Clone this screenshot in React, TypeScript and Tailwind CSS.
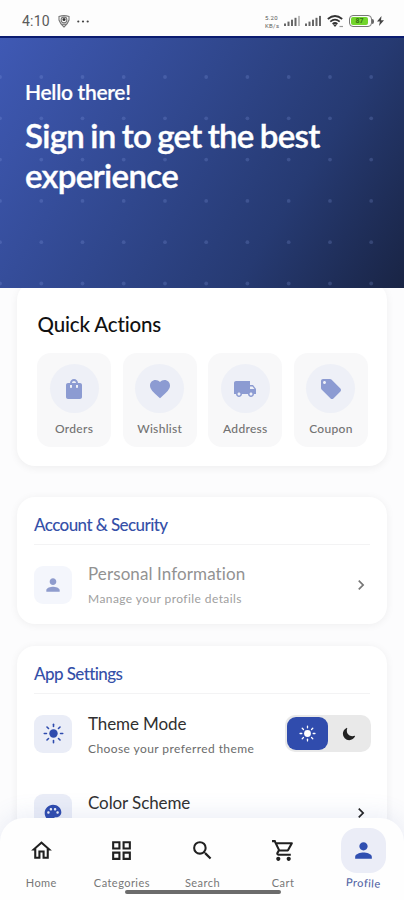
import type { ReactNode } from "react";
import type { IconType } from "react-icons";
import {
  MdFavorite,
  MdLocalOffer,
  MdLocalShipping,
  MdOutlineGridView,
  MdOutlineHome,
  MdOutlineShoppingCart,
  MdPalette,
  MdPerson,
  MdSearch,
  MdShoppingBag,
  MdChevronRight,
} from "react-icons/md";
import { IoMoon } from "react-icons/io5";

type IconProps = { size?: number | string; color?: string };

function Sun({ size = 20, color = "#000" }: IconProps) {
  return (
    <svg width={size} height={size} viewBox="0 0 20 20" fill="none" stroke={color} strokeWidth="1.500" strokeLinecap="round">
      <circle cx="10" cy="10" r="4" fill={color} stroke="none" />
      {[0, 45, 90, 135, 180, 225, 270, 315].map((a) => (
        <path key={a} d="M10 3.300V1.200" transform={`rotate(${a} 10 10)`} />
      ))}
    </svg>
  );
}

function Signal({ bars }: { bars: number }) {
  return (
    <svg width="17" height="12" viewBox="0 0 17 12" className="shrink-0">
      {[0, 1, 2, 3, 4].map((i) => (
        <rect
          key={i}
          x={i * 3.5}
          y={8.5 - i * 1.9}
          width="2"
          height={2.5 + i * 1.9}
          fill={i < bars ? "#666" : "#bdbdbd"}
        />
      ))}
    </svg>
  );
}

function StatusBar() {
  return (
    <div className="flex h-9 shrink-0 items-center bg-[#fdfdfd] pl-[22px] pr-[20px] pt-[6px] text-[#5a5a5a]">
      <span className="w-[29px] font-['Roboto',sans-serif] text-[14px] leading-none tracking-[0.2px]">4:10</span>
      <svg width="12" height="13" viewBox="0 0 12 13" className="ml-[7px]" fill="none" stroke="#777" strokeWidth="1.1">
        <path d="M1 1.5Q6 -.3 11 1.5V5Q10 8.500 6 12Q2 8.500 1 5Z" />
        <circle cx="6" cy="5" r="2.900" />
        <circle cx="6" cy="4.600" r="1.500" fill="#333" stroke="none" />
        <path d="M3.800 9.300H8.200" />
      </svg>
      <svg width="12" height="3" viewBox="0 0 12 3" className="ml-[7px]" fill="#444">
        <circle cx="1.300" cy="1.500" r="1.100" />
        <circle cx="6" cy="1.500" r="1.100" />
        <circle cx="10.700" cy="1.500" r="1.100" />
      </svg>
      <div className="ml-auto flex items-center">
        <div className="flex w-[16px] flex-col gap-px font-['Roboto',sans-serif] text-[6px] leading-[7px] tracking-[0.3px]">
          <div>5.20</div>
          <div>KB/s</div>
        </div>
        <div className="ml-[3px] flex gap-[4px]">
          <Signal bars={4} />
          <Signal bars={5} />
        </div>
        <svg width="17" height="13" viewBox="0 0 17 13" className="ml-[5px]" fill="none" stroke="#333" strokeWidth="1.700">
          <path d="M.8 4Q8 -2 15.200 4" />
          <path d="M3.300 6.600Q8 2.700 12.700 6.600" />
          <path d="M5.600 9Q8 7 10.400 9" />
          <path d="M6 9.500L8 12L10 9.500Z" fill="#333" stroke="none" />
          <path d="M12.500 11.500H16" strokeWidth="1.200" stroke="#999" />
        </svg>
        <div className="ml-[5px] flex h-[12px] w-[23px] items-center rounded-[4px] border border-[#777] p-[1px]">
          <div className="flex h-full w-[17px] items-center justify-center rounded-[2px] bg-[#72d52c] font-['Roboto',sans-serif] text-[7px] font-bold leading-none text-[#347314]">
            87
          </div>
        </div>
        <div className="h-[5px] w-[2px] rounded-r bg-[#666]" />
        <svg width="7" height="10" viewBox="0 0 7 10" className="ml-[3px]" fill="#444">
          <path d="M4.500 0L0 5.600H2.900L2 10L7 4.200H4Z" />
        </svg>
      </div>
    </div>
  );
}

function Hero() {
  return (
    <header className="relative z-10 h-[252px] shrink-0 overflow-hidden border-t-2 border-[#0b1c70] bg-[linear-gradient(122deg,#3f59b4_0%,#30478d_42%,#263a72_70%,#192444_100%)] pl-[25px] pt-[41px] text-white">
      <svg className="absolute inset-x-0 -top-px" width="404" height="252" fill="#8fa3ea" fillOpacity="0.22">
        {[40, 81.300, 122.600, 163.900, 205.200, 246.500].map((y) =>
          [0, 41.300, 82.500, 123.700, 165, 206.200, 247.400, 288.700, 330, 371.200].map((x) => (
            <circle key={`${x}-${y}`} cx={x} cy={y} r="1.900" />
          )),
        )}
      </svg>
      <p className="relative text-[21px] font-semibold leading-[26px] tracking-[-0.300px] [-webkit-text-stroke:0.2px_white]">
        Hello there!
      </p>
      <h1 className="relative mt-[10px] text-[33px] font-semibold leading-[40px] tracking-[-0.670px] [-webkit-text-stroke:0.4px_white] [word-spacing:-1.500px]">
        Sign in to get the best
        <br />
        experience
      </h1>
    </header>
  );
}

const actions: { label: string; Icon: IconType }[] = [
  { label: "Orders", Icon: MdShoppingBag },
  { label: "Wishlist", Icon: MdFavorite },
  { label: "Address", Icon: MdLocalShipping },
  { label: "Coupon", Icon: MdLocalOffer },
];

function QuickActions() {
  return (
    <section className="-mt-[6px] h-[184px] shrink-0 rounded-[18px] bg-white pl-[20px] pr-[19px] pt-[29px] shadow-[0_2px_9px_rgba(0,0,0,0.06)]">
      <h2 className="pl-[0.500px] text-[20.500px] font-medium leading-[26px] tracking-[-0.150px] text-[#111]">Quick Actions</h2>
      <div className="mt-[16px] grid grid-cols-4 gap-[11.500px]">
        {actions.map(({ label, Icon }) => (
          <div key={label} className="flex h-[94px] flex-col items-center rounded-[14px] bg-[#f8f8f9] pt-[11px]">
            <div className="flex h-[49px] w-[49px] items-center justify-center rounded-full bg-[#eef0f7]">
              <Icon size={24} color="#8c9bd2" />
            </div>
            <span className="mt-[8px] text-[12px] font-medium leading-[16px] tracking-[0.3px] text-[#727272]">{label}</span>
          </div>
        ))}
      </div>
    </section>
  );
}

function Section({ title, className, children }: { title: string; className: string; children: ReactNode }) {
  return (
    <section className={`shrink-0 rounded-[18px] bg-white px-[17px] pt-[16px] shadow-[0_1px_9px_rgba(0,0,0,0.06)] ${className}`}>
      <h2 className="h-[32px] border-b border-[#f3f3f4] text-[17px] font-medium leading-[24px] tracking-[-0.580px] text-[#3550a8]">
        {title}
      </h2>
      {children}
    </section>
  );
}

function Row({
  Icon,
  iconSize = 20,
  title,
  subtitle,
  muted = false,
  trailing,
}: {
  Icon: IconType | typeof Sun;
  iconSize?: number;
  title: string;
  subtitle: string;
  muted?: boolean;
  trailing: ReactNode;
}) {
  return (
    <div className="flex h-[79.500px] items-center">
      <div className={`flex h-[38px] w-[38px] items-center justify-center rounded-[9px] ${muted ? "bg-[#f4f6fc]" : "bg-[#eaedf7]"}`}>
        <Icon size={iconSize} color={muted ? "#8f9ccd" : "#2e4bae"} />
      </div>
      <div className={`ml-[16px] flex-1 ${muted ? "pt-[1.500px]" : "pt-[3px]"}`}>
        <div
          className={`text-[17px] leading-[22px] ${muted ? "tracking-[0.1px] text-[#929292]" : "tracking-[-0.1px] text-[#303030]"}`}
        >
          {title}
        </div>
        <div className={`mt-[5px] text-[12px] leading-[18px] tracking-[0.420px] ${muted ? "text-[#a0a0a0]" : "text-[#6b6b6b]"}`}>
          {subtitle}
        </div>
      </div>
      {trailing}
    </div>
  );
}

function ThemeToggle() {
  return (
    <div className="-mr-[1px] flex h-[37px] w-[86px] items-center rounded-[10px] bg-[#e9e9e9] p-[1.500px]">
      <div className="flex h-[33px] w-[41px] items-center justify-center rounded-[9px] bg-[#304cad]">
        <Sun size={17} color="#fff" />
      </div>
      <div className="flex flex-1 items-center justify-center">
        <IoMoon size={14} color="#222" />
      </div>
    </div>
  );
}

const tabs: { label: string; Icon: IconType }[] = [
  { label: "Home", Icon: MdOutlineHome },
  { label: "Categories", Icon: MdOutlineGridView },
  { label: "Search", Icon: MdSearch },
  { label: "Cart", Icon: MdOutlineShoppingCart },
  { label: "Profile", Icon: MdPerson },
];

function TabBar() {
  return (
    <nav className="absolute inset-x-0 bottom-0 z-20 h-[82px] rounded-t-[24px] bg-[#fefefe] shadow-[0_-3px_24px_rgba(80,105,180,0.12)]">
      <div className="grid grid-cols-5 pl-px">
        {tabs.map(({ label, Icon }) => {
          const active = label === "Profile";
          return (
            <div key={label} className="flex flex-col items-center pt-[10px]">
              <div className={`flex h-[45px] w-[45px] items-center justify-center rounded-[16px] ${active ? "bg-[#ebedf7]" : ""}`}>
                <Icon size={25} color={active ? "#304fb1" : "#202020"} />
              </div>
              <span
                className={`mt-[2px] text-[11px] leading-[16px] tracking-[0.45px] ${
                  active ? "rotate-3 font-medium text-[#5667a5]" : "text-[#777]"
                }`}
              >
                {label}
              </span>
            </div>
          );
        })}
      </div>
      <div className="absolute bottom-[6px] left-[125px] h-[4px] w-[156px] rounded-full bg-[#6b6b6b]" />
    </nav>
  );
}

export default function App() {
  return (
    <div className="relative flex h-[900px] w-[404px] flex-col overflow-hidden bg-[#fcfcfd] font-['Lato',sans-serif]">
      <StatusBar />
      <Hero />
      <main className="flex flex-col px-[17px]">
        <QuickActions />
        <Section title="Account & Security" className="mt-[31px] h-[127px]">
          <Row
            Icon={MdPerson}
            title="Personal Information"
            subtitle="Manage your profile details"
            muted
            trailing={<MdChevronRight size={20} color="#777" className="-mr-px" />}
          />
        </Section>
        <Section title="App Settings" className="mt-[22px] h-[300px]">
          <Row
            Icon={Sun}
            iconSize={21}
            title="Theme Mode"
            subtitle="Choose your preferred theme"
            trailing={<ThemeToggle />}
          />
          <Row
            Icon={MdPalette}
            title="Color Scheme"
            subtitle="Choose your color scheme"
            trailing={<MdChevronRight size={20} color="#222" className="-mr-px" />}
          />
        </Section>
      </main>
      <TabBar />
    </div>
  );
}
